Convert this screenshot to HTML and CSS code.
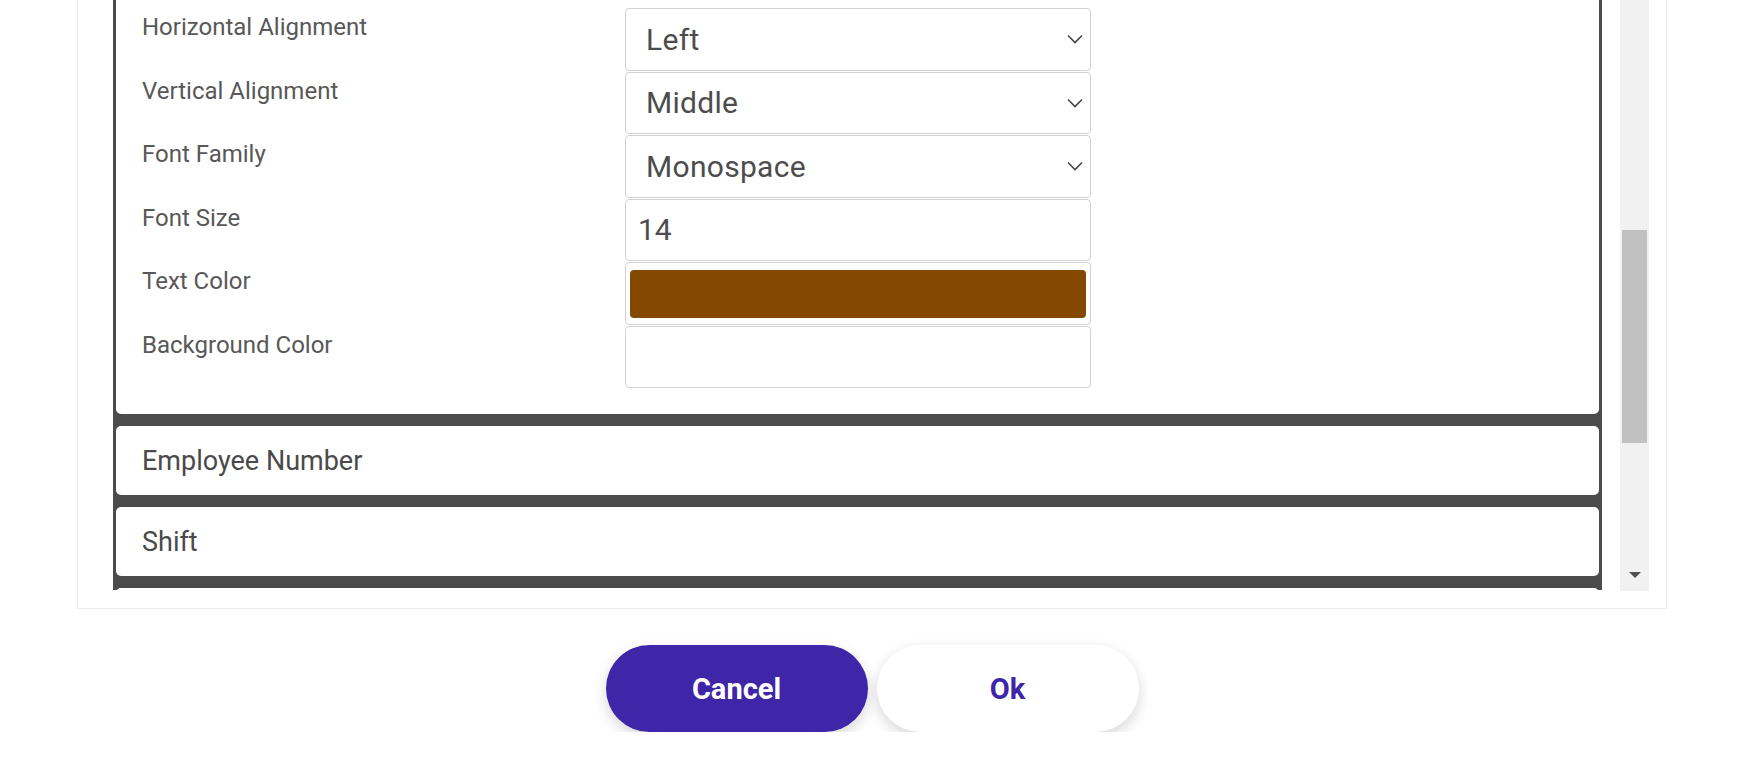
FILE: index.html
```html
<!doctype html>
<html lang="en">
  <head>
    <meta charset="UTF-8" />
    <meta name="viewport" content="width=device-width, initial-scale=1.0" />
    <title>Field Settings</title>
    <link rel="stylesheet" href="styles.css">
  </head>
  <body>
    <div class="dialog">
      <!-- Field list -->
      <section class="panel">
        <div class="scroll-area">
          <div class="field-list" id="fieldList">
            <div class="field open">
              <div class="field-head">Employee Name</div>
              <div class="props">
                <div class="prop-label" id="firstVisibleRow">Horizontal Alignment</div>
                <div class="control select-wrap">
                  <select class="select">
                    <option>Left</option>
                    <option>Center</option>
                    <option>Right</option>
                  </select>
                  <svg class="chevron" width="16" height="10" viewBox="0 0 16 10"><polyline points="1,1.5 8,8.5 15,1.5" /></svg>
                </div>

                <div class="prop-label">Vertical Alignment</div>
                <div class="control select-wrap">
                  <select class="select">
                    <option>Top</option>
                    <option selected>Middle</option>
                    <option>Bottom</option>
                  </select>
                  <svg class="chevron" width="16" height="10" viewBox="0 0 16 10"><polyline points="1,1.5 8,8.5 15,1.5" /></svg>
                </div>

                <div class="prop-label">Font Family</div>
                <div class="control select-wrap">
                  <select class="select">
                    <option>Sans Serif</option>
                    <option>Serif</option>
                    <option selected>Monospace</option>
                  </select>
                  <svg class="chevron" width="16" height="10" viewBox="0 0 16 10"><polyline points="1,1.5 8,8.5 15,1.5" /></svg>
                </div>

                <div class="prop-label">Font Size</div>
                <div class="control"><input class="text-input" type="text" value="14" /></div>

                <div class="prop-label">Text Color</div>
                <div class="control color-box"><div class="swatch swatch-brown"></div></div>

                <div class="prop-label">Background Color</div>
                <div class="control color-box"></div>
              </div>
            </div>
            <div class="field"><div class="field-head">Employee Number</div></div>
            <div class="field"><div class="field-head">Shift</div></div>
            <div class="field"><div class="field-head">Department</div></div>
            <div class="field"><div class="field-head">Start Date</div></div>
          </div>

          <div class="scrollbar">
            <div class="thumb"></div>
            <div class="arrow-down"><span class="triangle"></span></div>
          </div>
        </div>
      </section>

      <!-- Actions -->
      <div class="actions">
        <button class="btn btn-cancel">Cancel</button>
        <button class="btn btn-ok">Ok</button>
      </div>
    </div>

    <script src="script.js"></script>
  </body>
</html>
```

FILE: styles.css
```css
* {
  margin: 0;
  padding: 0;
  box-sizing: border-box;
}
body {
  font-family: Roboto, "Noto Sans", Arial, sans-serif;
  background: #fff;
  color: #4d4d4d;
}
.dialog {
  width: 1590px;
  margin-left: 77px;
}
.panel {
  border: 1px solid #ebebeb;
  border-top: none;
  padding: 0 17px 18px 35px;
}
.scroll-area {
  display: flex;
  gap: 18px;
  height: 590px;
}
.field-list {
  width: 1489px;
  height: 590px;
  overflow: hidden;
  background: #4b4b4b;
  padding: 0 3px;
}
.field {
  background: #fff;
  border-radius: 5px;
  margin-bottom: 12px;
}
.field-head {
  height: 69px;
  display: flex;
  align-items: center;
  padding-left: 26px;
  font-size: 27px;
  color: #4a4a4a;
}
.props {
  display: grid;
  grid-template-columns: 483px 466px;
  row-gap: 1px;
  padding: 20px 26px 26px;
}
.prop-label {
  font-size: 24px;
  line-height: 29px;
  padding-top: 5px;
  color: #585858;
}
.control {
  height: 62.5px;
  border: 1px solid #d2d2d2;
  border-radius: 4px;
  background: #fff;
}
.select-wrap {
  position: relative;
}
.select {
  appearance: none;
  -webkit-appearance: none;
  width: 100%;
  height: 100%;
  border: none;
  background: transparent;
  outline: none;
  font-family: inherit;
  font-size: 30px;
  color: #4d4d4d;
  padding-left: 20px;
  letter-spacing: 0.3px;
}
.chevron {
  position: absolute;
  right: 7px;
  top: 25px;
  fill: none;
  stroke: #454545;
  stroke-width: 1.6;
}
.text-input {
  width: 100%;
  height: 100%;
  border: none;
  outline: none;
  background: transparent;
  font-family: inherit;
  font-size: 30px;
  color: #4d4d4d;
  padding-left: 12px;
}
.color-box {
  padding: 7px 4px 6px;
}
.swatch {
  height: 100%;
  border-radius: 4px;
}
.swatch-brown {
  background: #844800;
}
.scrollbar {
  width: 29px;
  height: 591px;
  background: #f1f1f1;
  display: flex;
  flex-direction: column;
}
.thumb {
  margin: 230px 2px 0;
  height: 213px;
  background: #c1c1c1;
}
.arrow-down {
  margin-top: auto;
  height: 32px;
  display: flex;
  align-items: center;
  justify-content: center;
}
.triangle {
  width: 0;
  height: 0;
  border-left: 6.5px solid transparent;
  border-right: 6.5px solid transparent;
  border-top: 6px solid #505050;
}
.actions {
  display: flex;
  justify-content: center;
  gap: 9px;
  margin-top: 36px;
}
.btn {
  width: 262px;
  height: 87px;
  border: none;
  border-radius: 44px;
  font-family: inherit;
  font-size: 29px;
  font-weight: 700;
  box-shadow: 0 5px 14px rgba(0, 0, 0, 0.16);
  cursor: pointer;
}
.btn-cancel {
  background: #3f25a8;
  color: #fff;
}
.btn-ok {
  background: #fff;
  color: #3f25a8;
}
```

FILE: script.js
```js
// Keep the list scrolled to the alignment settings
const list = document.getElementById('fieldList');
const row = document.getElementById('firstVisibleRow');
list.scrollTop = row.getBoundingClientRect().top - list.getBoundingClientRect().top - 8;
```
